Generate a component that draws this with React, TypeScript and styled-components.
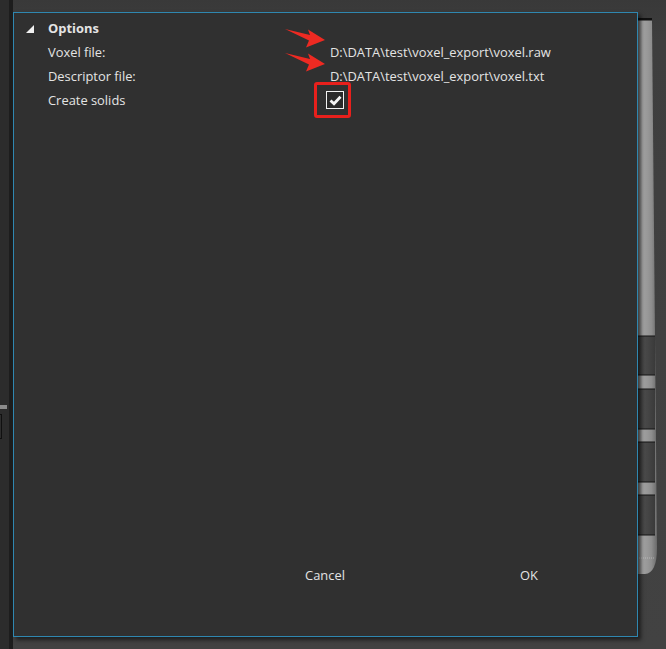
import { createGlobalStyle, styled } from 'styled-components';

const GlobalStyle = createGlobalStyle`
  html, body {
    margin: 0;
    padding: 0;
    background: #3e3e3e;
    overflow: hidden;
  }
  body {
    font-family: "Open Sans", "Noto Sans", "Liberation Sans", sans-serif;
  }
`;

const Screen = styled.div`
  display: flex;
  width: 666px;
  height: 649px;
  overflow: hidden;
`;

const LeftRail = styled.div`
  width: 9px;
  background: #2c2c2c;
  padding-top: 405px;
  box-sizing: border-box;
`;

const RailBar = styled.div`
  width: 7px;
  height: 4px;
  background: #8c8c8c;
`;

const RailBox = styled.div`
  margin-top: 5px;
  width: 1px;
  height: 23px;
  border: 1px solid #101010;
  border-left: none;
`;

const Divider = styled.div`
  width: 4px;
  background: #1d1d1d;
`;

const Viewport = styled.div`
  position: relative;
  flex: 1;
  padding-top: 12px;
  background: linear-gradient(180deg, #393939 0px, #3e3e3e 40px, #424242 100%);
`;

const Rod = styled.svg`
  position: absolute;
  left: 622px;
  top: 18px;
`;

const Dialog = styled.div`
  position: relative;
  z-index: 1;
  width: 625px;
  height: 625px;
  box-sizing: border-box;
  border: 1px solid #2f87b0;
  background: #303030;
  box-shadow: 3px 3px 4px rgba(0, 0, 0, 0.55);
  display: flex;
  flex-direction: column;
  color: #e4e4e4;
  font-size: 12.9px;
`;

const Tree = styled.div`
  flex: 1;
  padding-top: 3px;
`;

const Row = styled.div`
  position: relative;
  display: grid;
  grid-template-columns: 34px 282px 1fr;
  align-items: center;
  height: 24px;
`;

const Toggle = styled.svg`
  justify-self: start;
  margin-left: 12px;
  margin-top: 2px;
`;

const Label = styled.span<{ $bold?: boolean }>`
  font-weight: ${(p) => (p.$bold ? 700 : 400)};
  white-space: nowrap;
`;

const Value = styled.span`
  white-space: nowrap;
`;

const Arrow = styled.svg`
  position: absolute;
  left: 268px;
  top: -12px;
`;

const CheckCell = styled.div`
  position: relative;
  margin-left: -4px;
  width: 18px;
  height: 18px;
`;

const CheckBox = styled.div`
  width: 18px;
  height: 18px;
  box-sizing: border-box;
  border: 1px solid #f2f2f2;
  background: #2a2a2a;
  display: flex;
  align-items: center;
  justify-content: center;
`;

const Highlight = styled.div`
  position: absolute;
  left: -12px;
  top: -9px;
  width: 37px;
  height: 36px;
  box-sizing: border-box;
  border: 3px solid #e8201c;
  border-radius: 3px;
`;

const Footer = styled.div`
  display: flex;
  justify-content: flex-end;
  padding: 0 6px 49px 0;
`;

const FooterButton = styled.button`
  width: 204px;
  height: 24px;
  background: transparent;
  border: none;
  color: #e4e4e4;
  font-family: inherit;
  font-size: 12.9px;
  cursor: pointer;
`;

const RedArrow = () => (
  <Arrow width="46" height="22" viewBox="0 0 46 22">
    <polygon points="3,1 28,7 26,1.5 43,12 24,19.5 27,12.5" fill="#ee2a22" />
  </Arrow>
);

const rodBands = [
  [318, 357],
  [371, 411],
  [424, 464],
  [477, 517],
];

const App = () => {
  return (
    <>
      <GlobalStyle />
      <Screen>
        <LeftRail>
          <RailBar />
          <RailBox />
        </LeftRail>
        <Divider />
        <Viewport>
          <Rod width="24" height="560" viewBox="0 0 24 560">
            <defs>
              <linearGradient id="rodLight" x1="0" x2="1" y1="0" y2="0">
                <stop offset="0" stopColor="#6e6e6e" />
                <stop offset="0.35" stopColor="#a4a4a4" />
                <stop offset="0.75" stopColor="#8e8e8e" />
                <stop offset="1" stopColor="#6a6a6a" />
              </linearGradient>
              <linearGradient id="rodDark" x1="0" x2="1" y1="0" y2="0">
                <stop offset="0" stopColor="#333" />
                <stop offset="0.5" stopColor="#4a4a4a" />
                <stop offset="1" stopColor="#3a3a3a" />
              </linearGradient>
            </defs>
            <path d="M0 2 L17 2 L22 530 Q22 555 10 556 L0 556 Z" fill="url(#rodLight)" />
            <rect x="0" y="0" width="17" height="2.5" fill="#111" />
            {rodBands.map(([a, b]) => (
              <g key={a}>
                <rect x="0" y={a} width="20" height={b - a} fill="url(#rodDark)" />
                <line x1="0" x2="20" y1={a} y2={a} stroke="#151515" />
                <line x1="0" x2="20" y1={b} y2={b} stroke="#151515" />
              </g>
            ))}
            <line x1="0" x2="20" y1="540" y2="540" stroke="#ddd" strokeDasharray="1 1" opacity="0.5" />
          </Rod>
          <Dialog>
            <Tree>
              <Row>
                <Toggle width="8" height="8" viewBox="0 0 8 8">
                  <polygon points="8,0 8,8 0,8" fill="#f0f0f0" />
                </Toggle>
                <Label $bold>Options</Label>
                <span />
              </Row>
              <Row>
                <span />
                <Label>Voxel file:</Label>
                <Value>D:\DATA\test\voxel_export\voxel.raw</Value>
                <RedArrow />
              </Row>
              <Row>
                <span />
                <Label>Descriptor file:</Label>
                <Value>D:\DATA\test\voxel_export\voxel.txt</Value>
                <RedArrow />
              </Row>
              <Row>
                <span />
                <Label>Create solids</Label>
                <CheckCell>
                  <CheckBox>
                    <svg width="13" height="11" viewBox="0 0 13 11">
                      <path
                        d="M1.5 5.5 L5 8.8 L11.5 1.8"
                        stroke="#f4f4f4"
                        strokeWidth="2.8"
                        fill="none"
                      />
                    </svg>
                  </CheckBox>
                  <Highlight />
                </CheckCell>
              </Row>
            </Tree>
            <Footer>
              <FooterButton>Cancel</FooterButton>
              <FooterButton>OK</FooterButton>
            </Footer>
          </Dialog>
        </Viewport>
      </Screen>
    </>
  );
};

export default App;
